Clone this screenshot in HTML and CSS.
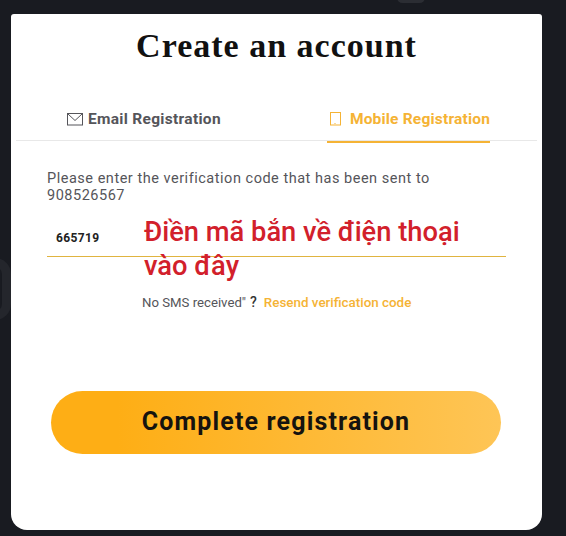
FILE: index.html
```html
<!DOCTYPE html>
<html lang="en">
<head>
<meta charset="utf-8">
<title>Create an account</title>
<link rel="stylesheet" href="styles.css">
</head>
<body>
<div class="backdrop-shape"></div>
<div class="backdrop-tab"></div>
<main class="card">
  <h1 class="title">Create an account</h1>
  <nav class="tabs">
    <div class="tab">
      <svg class="tab-icon" width="16" height="13" viewBox="0 0 16 13" fill="none" stroke="#55555a" stroke-width="1"><rect x="0.5" y="0.5" width="15" height="11.5"/><path d="M1 1l7 6.5L15 1"/></svg>
      <span>Email Registration</span>
    </div>
    <div class="tab tab-active">
      <svg class="tab-icon" width="12" height="14" viewBox="0 0 12 14" fill="none" stroke="#f5b335" stroke-width="1"><rect x="1.5" y="0.5" width="10" height="12.5"/><path d="M5.5 11.5h1"/></svg>
      <span>Mobile Registration</span>
    </div>
  </nav>
  <section class="form">
    <p class="hint">Please enter the verification code that has been sent to<br>908526567</p>
    <div class="code-field">665719</div>
    <p class="resend"><span>No SMS received"</span><b class="q">?</b><a class="resend-link">Resend verification code</a></p>
    <button class="submit" type="button">Complete registration</button>
  </section>
  <div class="note">Điền mã bắn về điện thoại<br>vào đây</div>
</main>
</body>
</html>
```

FILE: styles.css
```css
* { box-sizing: border-box; }
html, body { margin: 0; height: 100%; }
body {
  position: relative;
  width: 566px;
  height: 536px;
  overflow: hidden;
  background: #191b21;
  padding: 14px 24px 6px 11px;
  font-family: "Roboto", "Liberation Sans", sans-serif;
}
.backdrop-shape {
  position: absolute;
  left: -24px;
  top: 258px;
  width: 35px;
  height: 62px;
  border: 9px solid #24262c;
  border-radius: 16px;
}
.backdrop-tab {
  position: absolute;
  left: 397px;
  top: -8px;
  width: 28px;
  height: 11px;
  border-radius: 6px;
  background: #2b2d33;
}
.card {
  position: relative;
  height: 516px;
  background: #fff;
  border-radius: 3px 3px 16px 16px;
  display: flex;
  flex-direction: column;
}
.title {
  margin: 12px 0 0;
  text-align: center;
  font: bold 34px/40px "Liberation Serif", serif;
  letter-spacing: 1px;
  color: #111;
}
.tabs {
  margin: 39px 5px 0;
  height: 36px;
  display: flex;
  border-bottom: 1px solid #e8e8e8;
}
.tab {
  display: flex;
  align-items: center;
  gap: 5px;
  height: 37px;
  padding-bottom: 9px;
  font-size: 15.5px;
  font-weight: 700;
  letter-spacing: 0.3px;
  color: #55555a;
}
.tab:first-child { margin-left: 51px; }
.tab-active {
  gap: 9px;
  height: 38px;
  margin-left: 106px;
  padding: 0 0 8px 2px;
  letter-spacing: 0.2px;
  color: #f5b335;
  border-bottom: 2px solid #f5b335;
}
.form {
  padding: 29px 36px 0 36px;
  display: flex;
  flex-direction: column;
}
.hint {
  margin: 0;
  font-size: 14.5px;
  line-height: 17px;
  letter-spacing: 0.52px;
  color: #55555a;
}
.code-field {
  margin-top: 13px;
  height: 40px;
  padding: 13px 0 0 9px;
  font-size: 12px;
  font-weight: 700;
  line-height: 16px;
  letter-spacing: 0.35px;
  color: #222;
  border-bottom: 1px solid #e0b440;
}
.resend {
  margin: 37px 0 0 95px;
  display: flex;
  align-items: center;
  height: 16px;
  font-size: 13.2px;
  color: #55555a;
}
.q {
  margin: 0 7px 0 4px;
  font-weight: 500;
  font-size: 14px;
  color: #333;
}
.resend-link { color: #f5b335; font-weight: 500; font-size: 13.4px; }
.submit {
  margin: 81px 0 0 4px;
  padding: 0 0 2px;
  width: 450px;
  height: 63px;
  border: 0;
  border-radius: 32px;
  background: linear-gradient(90deg, #feae15 15%, #fec556 100%);
  font-family: inherit;
  font-size: 25px;
  font-weight: 700;
  letter-spacing: 1.15px;
  color: #15130f;
}
.note {
  position: absolute;
  left: 133px;
  top: 201px;
  font-size: 27.3px;
  font-weight: 500;
  line-height: 34px;
  color: #d2202b;
}
```
